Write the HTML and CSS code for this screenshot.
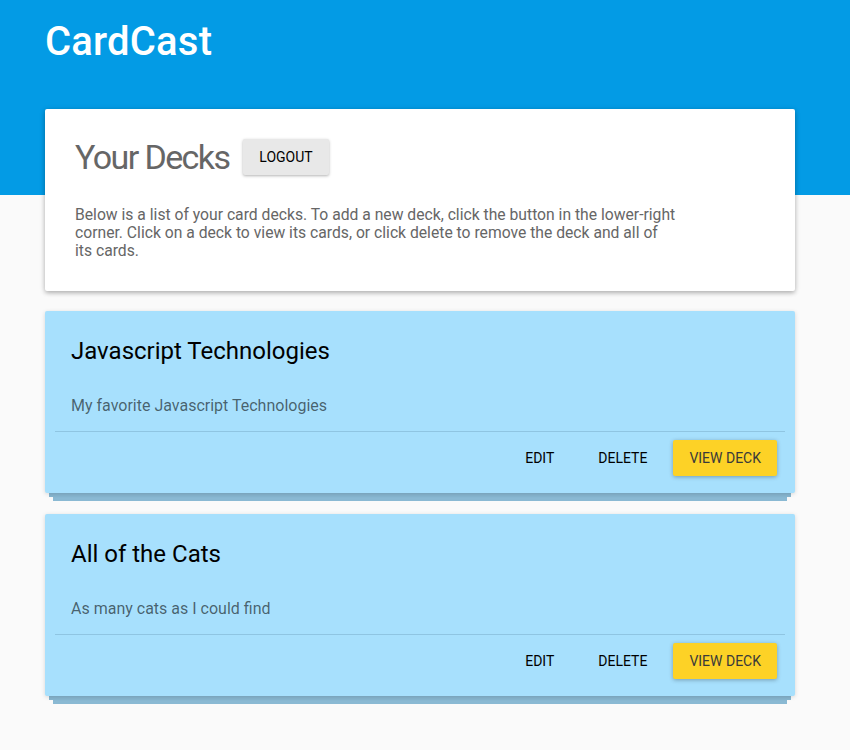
FILE: index.html
```html
<!DOCTYPE html>
<html>
<head>
<meta charset="utf-8">
<title>CardCast</title>
<link rel="stylesheet" href="styles.css">
</head>
<body>
<header class="app-bar">
  <h1 class="brand">CardCast</h1>
</header>
<main class="content">
  <section class="intro-card">
    <div class="intro-head">
      <h2 class="intro-title">Your Decks</h2>
      <button class="btn btn-grey">Logout</button>
    </div>
    <p class="intro-text">Below is a list of your card decks. To add a new deck, click the button in the lower-right corner. Click on a deck to view its cards, or click delete to remove the deck and all of<br>its cards.</p>
  </section>

  <section class="deck-card">
    <h3 class="deck-title">Javascript Technologies</h3>
    <p class="deck-desc">My favorite Javascript Technologies</p>
    <div class="deck-actions">
      <button class="btn btn-flat btn-edit">Edit</button>
      <button class="btn btn-flat btn-delete">Delete</button>
      <button class="btn btn-yellow">View Deck</button>
    </div>
  </section>

  <section class="deck-card">
    <h3 class="deck-title">All of the Cats</h3>
    <p class="deck-desc">As many cats as I could find</p>
    <div class="deck-actions">
      <button class="btn btn-flat btn-edit">Edit</button>
      <button class="btn btn-flat btn-delete">Delete</button>
      <button class="btn btn-yellow">View Deck</button>
    </div>
  </section>
</main>
</body>
</html>
```
FILE: styles.css
```css
html, body {
  margin: 0;
  padding: 0;
}
body {
  background: #fafafa;
  font-family: Roboto, "Noto Sans", "Liberation Sans", sans-serif;
  min-height: 750px;
}
.app-bar {
  background: #039be5;
  height: 195px;
  padding: 0 45px;
  box-sizing: border-box;
}
.brand {
  margin: 0;
  padding-top: 18px;
  font-size: 40px;
  font-weight: 500;
  line-height: 47px;
  color: #fff;
  letter-spacing: 0.2px;
}
.content {
  margin: -86px 45px 0;
  width: 750px;
  display: flex;
  flex-direction: column;
  gap: 20px;
}
.intro-card {
  background: #fff;
  border-radius: 2px;
  box-shadow: 0 1px 6px rgba(0,0,0,0.12), 0 2px 4px rgba(0,0,0,0.22);
  padding: 27px 30px 31px;
}
.intro-head {
  display: flex;
  align-items: center;
  gap: 14px;
}
.intro-title {
  margin: 0;
  font-size: 34px;
  font-weight: 400;
  line-height: 42px;
  color: #666;
  letter-spacing: -1.6px;
}
.intro-text {
  margin: 28px 0 0;
  max-width: 640px;
  font-size: 15.7px;
  line-height: 18px;
  color: #666;
}
.btn {
  font-family: Roboto, "Noto Sans", "Liberation Sans", sans-serif;
  font-size: 14px;
  text-transform: uppercase;
  height: 36px;
  padding: 0 16px;
  border: 0;
  border-radius: 2px;
  background: transparent;
  color: #111;
  cursor: pointer;
}
.btn-grey {
  background: #e8e8e8;
  color: #000;
  box-shadow: 0 1px 3px rgba(0,0,0,0.3);
}
.btn-yellow {
  background: #fdd226;
  color: #3a3a3a;
  box-shadow: 0 1px 4px rgba(0,0,0,0.3);
}
.deck-card {
  background: #a7e0fd;
  border-radius: 2px;
  padding: 26px 10px 17px;
  box-shadow: 0 1px 4px rgba(0,0,0,0.15), 0 8px 0 -4px #87b6d0, 0 16px 0 -8px #8ab9d3;
  margin-bottom: 1px;
}
.deck-title {
  margin: 0 16px;
  font-size: 24px;
  font-weight: 400;
  line-height: 28px;
  color: #000;
}
.deck-desc {
  margin: 31px 0 0;
  padding: 0 0 16px 16px;
  font-size: 16px;
  line-height: 19px;
  color: rgba(0,0,0,0.58);
  border-bottom: 1px solid #8fc5e2;
}
.deck-actions {
  display: flex;
  justify-content: flex-end;
  padding: 8px 8px 0;
}
.btn-flat {
  color: #000;
}
.btn-edit {
  margin-right: 12px;
}
.btn-delete {
  margin-right: 10px;
}
```
